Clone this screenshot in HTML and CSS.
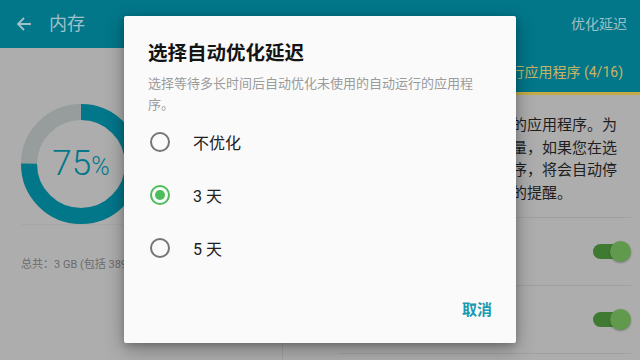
FILE: index.html
```html
<!DOCTYPE html>
<html lang="zh-CN">
<head>
<meta charset="utf-8">
<title>内存</title>
<link rel="stylesheet" href="styles.css">
</head>
<body>
<div class="screen">
  <header class="appbar">
    <svg class="back" width="16" height="16" viewBox="0 0 16 16" aria-hidden="true">
      <path d="M15 8H2M8 2L2 8l6 6" fill="none" stroke="currentColor" stroke-width="1.8"/>
    </svg>
    <span class="appbar-title">内存</span>
    <span class="appbar-action">优化延迟</span>
  </header>
  <main class="main">
    <section class="left">
      <div class="chart">
        <div class="donut">
          <svg class="donut-svg" width="120" height="120" viewBox="0 0 120 120" aria-hidden="true">
            <circle cx="60" cy="60" r="52" fill="none" stroke="#979c9c" stroke-width="16"/>
            <circle cx="60" cy="60" r="52" fill="none" stroke="#02778a" stroke-width="16"
              stroke-dasharray="245.04 326.73" transform="rotate(-90 60 60)"/>
          </svg>
          <div class="donut-label"><span class="num">75</span><span class="pct">%</span></div>
        </div>
      </div>
      <p class="total">总共：3 GB (包括 389 MB 系统内存)</p>
    </section>
    <section class="right">
      <nav class="tabs">
        <div class="tab"></div>
        <div class="tab active">自动运行应用程序 (4/16)</div>
      </nav>
      <div class="desc">
        <div class="line">自动优化会停止未使用自动运行的应用程序。为</div>
        <div class="line">了节省设备的运行内存和电池电量，如果您在选</div>
        <div class="line">定的时间内没有使用某个应用程序，将会自动停</div>
        <div class="line">止该应用，但不会影响应用程序的提醒。</div>
      </div>
      <ul class="list">
        <li class="item"><span class="item-name"></span><span class="switch"><span class="track"></span><span class="thumb"></span></span></li>
        <li class="item"><span class="item-name"></span><span class="switch"><span class="track"></span><span class="thumb"></span></span></li>
      </ul>
    </section>
  </main>

  <div class="dialog" role="dialog">
    <h1 class="dialog-title">选择自动优化延迟</h1>
    <p class="dialog-text">选择等待多长时间后自动优化未使用的自动运行的应用程序。</p>
    <div class="options">
      <div class="option"><span class="radio"></span><span class="option-label">不优化</span></div>
      <div class="option"><span class="radio checked"></span><span class="option-label">3 天</span></div>
      <div class="option"><span class="radio"></span><span class="option-label">5 天</span></div>
    </div>
    <div class="actions"><span class="btn">取消</span></div>
  </div>
</div>
</body>
</html>
```
FILE: styles.css
```css
* { box-sizing: border-box; }
html, body { margin: 0; padding: 0; }
body {
  width: 640px;
  height: 360px;
  overflow: hidden;
  font-family: Roboto, "Noto Sans CJK SC", sans-serif;
  background: #adadad;
}
.screen {
  position: relative;
  width: 640px;
  height: 360px;
  display: flex;
  flex-direction: column;
}
.appbar {
  height: 48px;
  flex: none;
  background: #02778a;
  color: #9fc1c7;
  display: flex;
  align-items: center;
  padding: 0 13px 0 16px;
}
.back { display: block; }
.appbar-title {
  margin-left: 17px;
  font-size: 18px;
  line-height: 24px;
}
.appbar-action {
  margin-left: auto;
  font-size: 14px;
  line-height: 20px;
}
.main {
  flex: 1;
  display: grid;
  grid-template-columns: 282px 1fr;
}
.left {
  padding: 56px 21px 0 21px;
}
.chart {
  height: 121px;
  border-bottom: 1px solid #a6a6a6;
}
.donut {
  display: grid;
  width: 120px;
  height: 120px;
}
.donut-svg, .donut-label { grid-area: 1 / 1; }
.donut-svg { display: block; }
.donut-label {
  place-self: center;
  color: #02778a;
  font-weight: 300;
  display: flex;
  align-items: baseline;
  margin-top: 3px;
}
.num { font-size: 35px; line-height: 40px; }
.pct { font-size: 25px; line-height: 40px; }
.total {
  margin: 32px 0 0;
  font-size: 11px;
  line-height: 16px;
  color: #6c6c6c;
  white-space: nowrap;
}
.right {
  border-left: 1px solid #a0a0a0;
  display: flex;
  flex-direction: column;
}
.tabs {
  height: 47px;
  background: #02778a;
  display: grid;
  grid-template-columns: 1fr 1fr;
}
.tab {
  display: flex;
  align-items: center;
  justify-content: center;
  font-size: 14px;
  color: #9fc1c7;
  white-space: nowrap;
  padding-bottom: 1px;
}
.tab.active {
  color: #c8b363;
  border-bottom: 3px solid #c5aa47;
  padding-right: 10px;
  padding-top: 2px;
}
.desc {
  padding: 18px 0 0 19px;
  font-size: 15px;
  line-height: 22.7px;
  color: #1e1e1e;
  font-family: "Noto Sans CJK SC", sans-serif;
}
.line { white-space: nowrap; }
.list {
  list-style: none;
  margin: 13px 9px 0 56px;
  padding: 0;
  border-bottom: 1px solid #a0a0a0;
}
.item {
  height: 68px;
  border-top: 1px solid #a0a0a0;
  display: flex;
  align-items: center;
  font-size: 15px;
  color: #1e1e1e;
}
.item-name { flex: 1; }
.switch {
  display: grid;
  width: 38px;
  height: 21px;
  align-items: center;
}
.track, .thumb { grid-area: 1 / 1; }
.track {
  width: 34px;
  height: 15px;
  border-radius: 8px;
  background: #3f7a32;
}
.thumb {
  justify-self: end;
  width: 21px;
  height: 21px;
  border-radius: 50%;
  background: #619a4d;
  box-shadow: 0 1px 2px rgba(0,0,0,.3);
}

.dialog {
  position: absolute;
  left: 124px;
  top: 16px;
  width: 392px;
  height: 327px;
  background: #fafafa;
  border-radius: 2px;
  box-shadow: 0 6px 20px rgba(0,0,0,.32), 0 2px 6px rgba(0,0,0,.18);
  display: flex;
  flex-direction: column;
  padding: 24px 0 15px;
  font-family: Roboto, "Noto Sans CJK SC", sans-serif;
}
.dialog-title {
  margin: 0 24px;
  font-size: 19.5px;
  line-height: 28px;
  font-weight: 700;
  color: #141414;
}
.dialog-text {
  margin: 6px 24px 0;
  font-size: 13px;
  line-height: 20.5px;
  color: #9b9b9b;
}
.options { display: flex; flex-direction: column; }
.option {
  height: 53px;
  display: flex;
  align-items: center;
  padding-left: 26px;
}
.radio {
  width: 20px;
  height: 20px;
  border-radius: 50%;
  border: 2px solid #757575;
  display: grid;
  place-items: center;
}
.radio.checked { border-color: #4dbd5b; }
.radio.checked::after {
  content: "";
  width: 10px;
  height: 10px;
  border-radius: 50%;
  background: #4dbd5b;
}
.option-label {
  margin-left: 23px;
  font-size: 16px;
  color: #202020;
}
.actions {
  margin-top: auto;
  display: flex;
  justify-content: flex-end;
  padding: 0 24px;
}
.btn {
  height: 36px;
  line-height: 36px;
  font-size: 15px;
  font-weight: 700;
  color: #1b9ab0;
}
```
